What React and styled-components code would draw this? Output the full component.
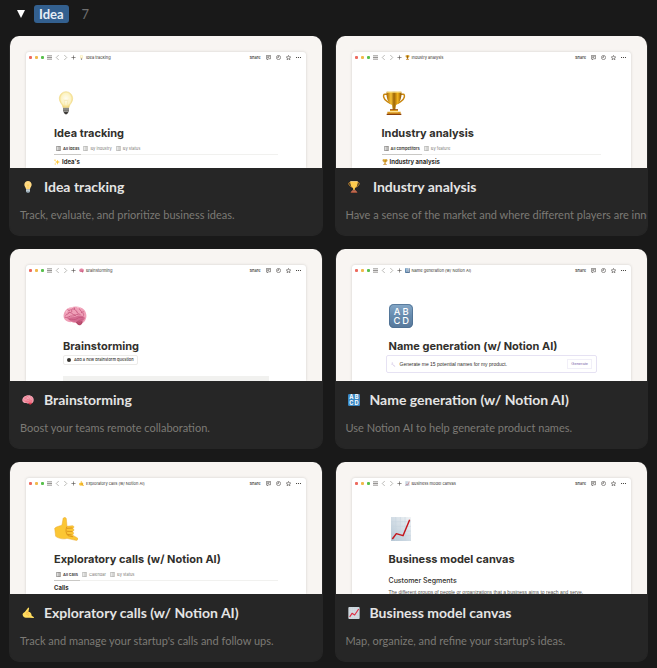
import React, { useState } from "react";
import styled, { createGlobalStyle } from "styled-components";


function Bulb({ flat }) {
  if (flat) {
    return (
      <svg viewBox="0 0 36 36" aria-hidden="true">
        <path fill="#FFD983" d="M29 11c0-6-5-11-11-11S7 5 7 11c0 6 5 8 5 14h12c0-6 5-8 5-14z" />
        <path fill="#FFCC4D" d="M17 26V15l-3-4 2-1 2 3 2-3 2 1-3 4v11z" />
        <path fill="#CCD6DD" d="M12 25h12v6H12z" />
        <path fill="#99AAB5" d="M12 29h12v3l-3 3h-6l-3-3z" />
      </svg>
    );
  }
  return (
    <svg viewBox="0 0 36 36" aria-hidden="true">
      <defs>
        <radialGradient id="bulbGlass" cx="50%" cy="45%" r="60%">
          <stop offset="0" stopColor="#FFFDF2" />
          <stop offset="0.6" stopColor="#FCF3C4" />
          <stop offset="1" stopColor="#EFC94F" />
        </radialGradient>
      </defs>
      <path fill="url(#bulbGlass)" stroke="#F0D987" strokeWidth="0.8" d="M28 11.5C28 5.500 23.500 1 18 1S8 5.500 8 11.500c0 6 5 8 5.500 13.500h9C23 19.500 28 17.500 28 11.500z" />
      <path fill="none" stroke="#F3DD9A" strokeWidth="0.6" d="M16.500 24L15 13l2 2 1-2 1 2 2-2-1.500 11" />
      <path fill="#A5A39D" d="M13.500 25h9v6h-9z" />
      <path stroke="#66645F" strokeWidth="1.200" d="M13.500 27h9M13.500 29.500h9" />
      <path fill="#3D3B38" d="M14 31h8l-2.500 4h-3z" />
    </svg>
  );
}

function Trophy({ flat }) {
  return (
    <svg viewBox="0 0 36 36" aria-hidden="true">
      <defs>
        <linearGradient id="trophyCup" x1="0" x2="1">
          <stop offset="0" stopColor="#A86500" />
          <stop offset="0.3" stopColor="#F5C238" />
          <stop offset="0.5" stopColor="#9C6406" />
          <stop offset="0.75" stopColor="#F3B41C" />
          <stop offset="1" stopColor="#8A5000" />
        </linearGradient>
      </defs>
      <path fill="none" stroke={flat ? "#FFAC33" : "#C98710"} strokeWidth="2.200" d="M9 5H4C1 5 2 13 8 16l5 3M27 5h5c3 0 2 8-4 11l-5 3" />
      <path fill={flat ? "#FFCC4D" : "url(#trophyCup)"} d="M7 1h22c1 9-2 17-8 20l-1 7h-4l-1-7C9 18 6 10 7 1z" />
      <path fill={flat ? "#FFE8B6" : "#F9DD79"} d="M7 1h22v1.500H7z" />
      <path fill={flat ? "#C1694F" : "#DB9A20"} d={flat ? "M12 28h12v3h3v4H9v-4h3z" : "M12 28h12v3h4v4H8v-4h4z"} />
      <path fill={flat ? "#9C4D35" : "#8B3F0A"} d={flat ? "M8 33h20v2H8z" : "M7 34h22v2H7zM12 27h12v1H12z"} />
      {!flat && <path fill="#FFE292" d="M12 30h12v2H12z" />}
    </svg>
  );
}

function Brain({ flat }) {
  const base = flat ? "#F4ABBA" : "#EF9FB7";
  const fold = flat ? "#EA596E" : "#C4547B";
  return (
    <svg viewBox="0 0 36 36" aria-hidden="true">
      <path fill={base} d="M1 20C0 14 4 6 12 5c7-3 16-1 20 4 4 5 4 12 1 16-2 4-6 4-8 3-5 1-9 1-12-1-5 1-11-2-12-7z" />
      <path fill={flat ? "#DD2E44" : "#B34A69"} d="M19 27c2 4 5 6 8 4 2-1 3-4 2-6l-6-1z" />
      <path fill={flat ? "#F28A9C" : "#D36B90"} d="M6 21c5-2 10 0 15-3 5-2 10 0 12 3-2 5-6 6-10 5-6 2-12 1-17-5z" />
      <g fill="none" stroke={fold} strokeWidth="1.200" strokeLinecap="round">
        <path d="M4 17c2-3 5-1 5-5 2 2 5 1 4-2s2-3 4-2M7 9c2 1 3 1 4 0M17 6c-1 4 4 3 4 6s4 2 5 4M25 7c-1 3 4 3 3 6M30 11c-2 2 2 4 1 6" />
        <path d="M3 20c4 2 7-3 11-2 4 1 5-4 9-2M13 14c1 3 5 1 6 3M10 23c4-1 8 2 11-1s7-1 9-2M22 26c2-2 5-1 7-3M22 27l4 3M25 26l2 3" />
      </g>
      {!flat && <path fill="none" stroke="#FFD3DE" strokeWidth="1" d="M8 7c2-2 5-1 7-2M21 5c3 0 5 1 6 2M5 13c0-2 1-3 2-4" />}
    </svg>
  );
}

function Letters({ flat }) {
  return (
    <svg viewBox="0 0 36 36" aria-hidden="true">
      <defs>
        <linearGradient id="lettersTile" x1="0" x2="0" y1="0" y2="1">
          <stop offset="0" stopColor="#86A9C8" />
          <stop offset="0.5" stopColor="#668BAE" />
          <stop offset="1" stopColor="#58789A" />
        </linearGradient>
      </defs>
      <rect width="36" height="36" rx={flat ? 4 : 7} fill={flat ? "#3B88C3" : "url(#lettersTile)"} />
      {!flat && <rect x="0.700" y="0.700" width="34.600" height="34.600" rx="6.500" fill="none" stroke="#4D6F91" strokeWidth="1.200" />}
      <g fill="#fff" fontFamily="Inter, sans-serif" fontWeight={flat ? 700 : 500} fontSize={flat ? 17 : 14} textAnchor="middle">
        <text x={flat ? 10 : 12} y="16">A</text>
        <text x={flat ? 26 : 25} y="16">B</text>
        <text x={flat ? 10 : 12} y={flat ? 33 : 30}>C</text>
        <text x={flat ? 26 : 25} y={flat ? 33 : 30}>D</text>
      </g>
    </svg>
  );
}

function CallHand({ flat }) {
  return (
    <svg viewBox="0 0 36 36" aria-hidden="true">
      <path
        fill={flat ? "#FFDC5D" : "#FBC634"}
        stroke={flat ? "none" : "#E7A526"}
        strokeWidth="0.700"
        d={flat
          ? "M19 2c2-1 3 1 2 4l-2 8c5 0 8 3 9 7l1 5 6 4c2 2 0 4-2 3l-10-1C12 34 3 31 2 24c-1-5 3-7 7-10l8-10z"
          : "M13.500 3c0-3 5-3 5 0l1 11 8-1c3 0 3 4 0 4 3 1 3 4 0 5 3 1 2 4 0 5l7 4c3 1 1 5-2 4l-13-3c-6 2-13 0-17-3L1 17c2-3 8-3 11-5z"}
      />
      <g fill="none" stroke={flat ? "#EF9645" : "#D98E17"} strokeWidth="1.300" strokeLinecap="round">
        {flat
          ? <path d="M14 17c4 0 7 2 7 5M12 21c4 0 7 1 7 5M19 14c-2 1-3 1-4 2" />
          : <path d="M20 17l7-.5M20 21.500l7 .2M20 26l6 .8M19 15c-2 5-1 10 2 13l7 1.500" />}
      </g>
    </svg>
  );
}

function Chart({ flat }) {
  return (
    <svg viewBox="0 0 36 36" aria-hidden="true">
      <defs>
        <linearGradient id="chartPaper" x1="0" x2="1" y1="1" y2="0">
          <stop offset="0" stopColor="#B3C5D4" />
          <stop offset="1" stopColor="#F1F4F6" />
        </linearGradient>
      </defs>
      <rect x={flat ? 1 : 3} width={flat ? 34 : 30} height="36" rx={flat ? 3 : 0} fill={flat ? "#CCD6DD" : "url(#chartPaper)"} />
      <path stroke={flat ? "#E1E8ED" : "#C6D3DE"} strokeWidth="0.800" d="M3 7h30M3 14h30M3 21h30M3 28h30M10 0v36M17 0v36M24 0v36" />
      <path fill="none" stroke={flat ? "#DD2E44" : "#C4151C"} strokeWidth={flat ? 3.5 : 2.2} strokeLinejoin="round" d={flat ? "M5 30l7-11 8 5L32 6" : "M5 33l6-8 10 3L31 4"} />
    </svg>
  );
}

function Sparkle() {
  return (
    <svg viewBox="0 0 36 36" aria-hidden="true">
      <path fill="#FFC93C" d="M21 4l4 10 11 4-11 4-4 12-4-12-11-4 11-4zM6 0l2 5 5 2-5 2-2 5-2-5-4-2 4-2zM7 24l2 4 4 2-4 2-2 4-2-4-4-2 4-2z" />
    </svg>
  );
}

function WindowBar({ icon: Icon, title }) {
  return (
    <Bar>
      <Dots>
        <Dot $color="#ed6a5e" />
        <Dot $color="#f0b94b" />
        <Dot $color="#58c04c" />
      </Dots>
      <BarButton aria-label="Menu"><svg viewBox="0 0 12 12"><path d="M0 2h12M0 6h12M0 10h12" /></svg></BarButton>
      <BarButton aria-label="Back" $faint><svg viewBox="0 0 12 12"><path d="M9 0L3 6l6 6" /></svg></BarButton>
      <BarButton aria-label="Forward" $faint><svg viewBox="0 0 12 12"><path d="M3 0l6 6-6 6" /></svg></BarButton>
      <BarButton aria-label="New page"><svg viewBox="0 0 12 12"><path d="M6 1v10M1 6h10" /></svg></BarButton>
      <Crumb><Glyph $size={5}><Icon /></Glyph>{title}</Crumb>
      <Actions>
        <ShareButton>Share</ShareButton>
        <BarButton aria-label="Comments"><svg viewBox="0 0 12 12"><path d="M1 1h10v8H6l-3 3V9H1zM3 4h6M3 6h4" /></svg></BarButton>
        <BarButton aria-label="Updates"><svg viewBox="0 0 12 12"><circle cx="6" cy="6" r="5" /><path d="M6 2v4H3" /></svg></BarButton>
        <BarButton aria-label="Favorite"><svg viewBox="0 0 12 12"><path d="M6 1l1.500 3.500 4 .3-3 2.600 1 4L6 9.200l-3.500 2.200 1-4-3-2.600 4-.3z" /></svg></BarButton>
        <BarButton aria-label="More"><svg viewBox="0 0 12 12"><path strokeWidth="2.500" d="M0 6h2.500M4.700 6h2.500M9.500 6H12" /></svg></BarButton>
      </Actions>
    </Bar>
  );
}

function MiniTabs({ tabs }) {
  return (
    <TabRow>
      {tabs.map((tab, idx) => (
        <Tab key={tab} $active={idx === 0}>
          <svg viewBox="0 0 12 12"><path d="M1 1h10v10H1zM5 1v10M8 1v10" /></svg>
          {tab}
        </Tab>
      ))}
    </TabRow>
  );
}

const cards = [
  {
    title: "Idea tracking",
    text: "Track, evaluate, and prioritize business ideas.",
    icon: Bulb,
    indent: 28,
    body: () => (
      <>
        <MiniTabs tabs={["All ideas", "By industry", "By status"]} />
        <SectionLine><Glyph $size={6}><Sparkle /></Glyph>Idea's</SectionLine>
      </>
    ),
  },
  {
    title: "Industry analysis",
    label: "\u00a0Industry analysis",
    text: "Have a sense of the market and where different players are innovating.",
    icon: Trophy,
    indent: 30,
    body: () => (
      <>
        <MiniTabs tabs={["All competitors", "By feature"]} />
        <SectionLine><Glyph $size={6}><Trophy /></Glyph>Industry analysis</SectionLine>
      </>
    ),
  },
  {
    title: "Brainstorming",
    text: "Boost your teams remote collaboration.",
    icon: Brain,
    indent: 37,
    body: () => (
      <>
        <AddButton><AddDot />Add a new brainstorm question</AddButton>
        <GreyBlock />
      </>
    ),
  },
  {
    title: "Name generation (w/ Notion AI)",
    text: "Use Notion AI to help generate product names.",
    icon: Letters,
    indent: 37,
    body: () => (
      <PromptBox>
        <svg viewBox="0 0 12 12"><path d="M3 1l1 3M1 5l3 1M5 7l5 4" /></svg>
        Generate me 15 potential names for my product.
        <Generate>Generate</Generate>
      </PromptBox>
    ),
  },
  {
    title: "Exploratory calls (w/ Notion AI)",
    text: "Track and manage your startup's calls and follow ups.",
    icon: CallHand,
    indent: 28,
    body: () => (
      <>
        <MiniTabs tabs={["All calls", "Calendar", "By status"]} />
        <SectionLine>Calls</SectionLine>
      </>
    ),
  },
  {
    title: "Business model canvas",
    text: "Map, organize, and refine your startup's ideas.",
    icon: Chart,
    indent: 37,
    body: () => (
      <>
        <Segments>Customer Segments</Segments>
        <SmallCopy>The different groups of people or organizations that a business aims to reach and serve.</SmallCopy>
      </>
    ),
  },
];

function GalleryCard({ card }) {
  const Icon = card.icon;
  return (
    <Card>
      <Cover>
        <Window>
          <WindowBar icon={Icon} title={card.title} />
          <Page $indent={card.indent}>
            <Glyph $size={24}><Icon /></Glyph>
            <PageTitle>{card.title}</PageTitle>
            {card.body()}
          </Page>
        </Window>
      </Cover>
      <CardBody>
        <CardLink href="#">
          <Glyph $size={12}><Icon flat /></Glyph>
          <span>{card.label || card.title}</span>
        </CardLink>
        <CardText>{card.text}</CardText>
      </CardBody>
    </Card>
  );
}

function App() {
  const [open, setOpen] = useState(true);

  return (
    <Board>
      <GlobalStyle />
      <GroupHead>
        <Toggle onClick={() => setOpen(!open)} aria-expanded={open} aria-label="Toggle group">
          <svg viewBox="0 0 8 8"><path fill="#fff" d={open ? "M0 0h8L4 8z" : "M0 0l8 4-8 4z"} /></svg>
        </Toggle>
        <Tag>Idea</Tag>
        <Count>{cards.length + 1}</Count>
      </GroupHead>
      {open && (
        <Gallery>
          {cards.map((card) => <GalleryCard key={card.title} card={card} />)}
        </Gallery>
      )}
    </Board>
  );
}

const GlobalStyle = createGlobalStyle`
  * {
    box-sizing: border-box;
  }
  body {
    margin: 0;
    background: #191919;
    font-family: Lato, sans-serif;
  }
  button {
    padding: 0;
    border: none;
    background: none;
    font: inherit;
    color: inherit;
    cursor: pointer;
  }
  svg {
    display: block;
  }
`

const Board = styled.main`
  padding: 4px 9px 6px;
`

const GroupHead = styled.div`
  display: flex;
  align-items: center;
  height: 20px;
  margin-bottom: 12px;
  padding-left: 8px;
`

const Toggle = styled.button`
  width: 8px;
  margin-right: 9px;
`

const Tag = styled.span`
  height: 18px;
  padding: 0 5px;
  border-radius: 3px;
  background: #33608f;
  color: #e6eef6;
  font-size: 13px;
  font-weight: 700;
  line-height: 18px;
`

const Count = styled.span`
  margin-left: 13px;
  color: #6f6f6f;
  font-size: 13px;
  line-height: 18px;
`

const Gallery = styled.div`
  display: grid;
  grid-template-columns: repeat(2, minmax(0, 1fr));
  gap: 13px 12px;
`

const Card = styled.article`
  border: 1px solid #262626;
  border-top: none;
  border-radius: 10px;
  background: #262626;
  overflow: hidden;
`

const Cover = styled.div`
  height: 132px;
  padding: 16px 16px 0;
  background: #f8f5f2;
  overflow: hidden;
`

const Window = styled.div`
  height: 100%;
  border-radius: 3px 3px 0 0;
  background: #fff;
  box-shadow: 0 0 3px rgba(0, 0, 0, 0.16);
  color: #32302c;
  font-family: Inter, sans-serif;
  font-size: 4px;
  line-height: 6px;
`

const Bar = styled.div`
  display: flex;
  align-items: center;
  gap: 3px;
  height: 11px;
  padding: 0 5px 0 3px;
`

const Dots = styled.span`
  display: flex;
  gap: 3px;
`

const Dot = styled.i`
  width: 3px;
  height: 3px;
  border-radius: 1px;
  background: ${(props) => props.$color};
`

const BarButton = styled.button`
  width: 5px;
  svg {
    width: 5px;
    height: 5px;
    fill: none;
    stroke: ${(props) => (props.$faint ? "#8b8985" : "#4b4945")};
    stroke-width: 1.4;
  }
`

const Crumb = styled.span`
  display: flex;
  align-items: center;
  gap: 2px;
  white-space: nowrap;
`

const Actions = styled.span`
  display: flex;
  align-items: center;
  gap: 5px;
  margin-left: auto;
`

const ShareButton = styled.button`
  font-weight: 500;
`

const Glyph = styled.span`
  display: block;
  flex: none;
  width: ${(props) => props.$size}px;
  height: ${(props) => props.$size}px;
  svg {
    width: 100%;
    height: 100%;
  }
`

const Page = styled.div`
  padding: 28px ${(props) => props.$indent}px 0;
`

const PageTitle = styled.h3`
  margin: 10px 0 0;
  font-size: 11px;
  font-weight: 700;
  line-height: 16px;
  white-space: nowrap;
`

const TabRow = styled.div`
  display: flex;
  height: 14px;
  border-bottom: 1px solid #f1f1ef;
`

const Tab = styled.button`
  display: flex;
  align-items: center;
  gap: 2px;
  height: 14px;
  padding: 2px 2px 0;
  border-bottom: 1px solid ${(props) => (props.$active ? "#c9c8c5" : "transparent")};
  color: ${(props) => (props.$active ? "#32302c" : "#7d7b77")};
  font-weight: ${(props) => (props.$active ? 600 : 400)};
  svg {
    width: 5px;
    height: 5px;
    fill: none;
    stroke: currentColor;
  }
`

const SectionLine = styled.div`
  display: flex;
  align-items: center;
  gap: 2px;
  height: 13px;
  font-size: 6px;
  font-weight: 700;
`

const AddButton = styled.button`
  display: flex;
  align-items: center;
  gap: 3px;
  height: 10px;
  margin-top: 1px;
  padding: 0 3px;
  border: 1px solid #ecebe9;
  border-radius: 2px;
  font-weight: 500;
`

const AddDot = styled.i`
  width: 4px;
  height: 4px;
  border-radius: 50%;
  background: #32302c;
`

const GreyBlock = styled.div`
  height: 12px;
  margin-top: 11px;
  background: #f1f1ef;
`

const PromptBox = styled.div`
  display: flex;
  align-items: center;
  gap: 4px;
  height: 18px;
  margin: 1px -3px 0;
  padding: 0 4px;
  border: 1px solid #e6e2f3;
  border-radius: 2px;
  font-family: "Liberation Sans", sans-serif;
  font-size: 5px;
  svg {
    width: 5px;
    height: 5px;
    stroke: #9a7fc4;
  }
`

const Generate = styled.button`
  height: 10px;
  margin-left: auto;
  padding: 0 3px;
  border: 1px solid #f1eff8;
  color: #7a5fa8;
  font-size: 4px;
  font-weight: 500;
`

const Segments = styled.div`
  margin-top: 8px;
  font-size: 7px;
  font-weight: 500;
  line-height: 12px;
`

const SmallCopy = styled.p`
  margin: 2px 0 0;
  color: #55534e;
  font-family: "Liberation Sans", sans-serif;
  font-size: 5px;
  white-space: nowrap;
`

const CardBody = styled.div`
  height: 67px;
  padding: 9px 0 0 10px;
`

const CardLink = styled.a`
  display: flex;
  align-items: center;
  gap: 10px;
  padding-left: 2px;
  color: #e4e4e4;
  font-size: 14px;
  font-weight: 700;
  line-height: 20px;
  text-decoration: none;
  white-space: nowrap;
`

const CardText = styled.p`
  margin: 10px 0 0;
  color: #7c7a75;
  font-size: 11px;
  line-height: 16px;
  white-space: nowrap;
`


export default App;
